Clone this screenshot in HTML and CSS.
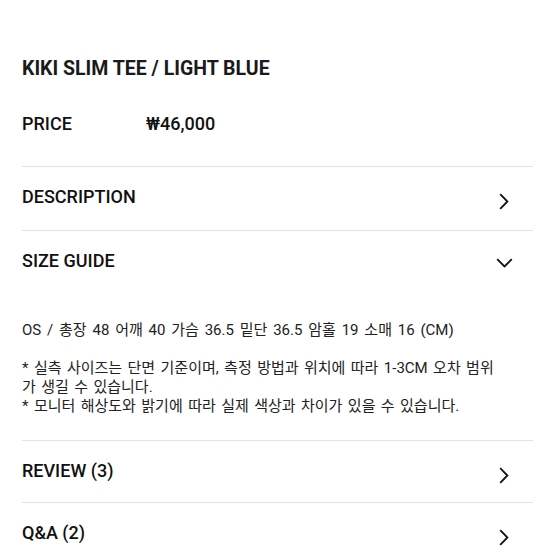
FILE: index.html
```html
<!DOCTYPE html>
<html lang="ko">
<head>
<meta charset="utf-8">
<link rel="stylesheet" href="styles.css">
</head>
<body>
<div class="page">
  <h1 class="title">KIKI SLIM TEE / LIGHT BLUE</h1>
  <div class="price">
    <span class="price-label">PRICE</span>
    <span class="price-value">₩46,000</span>
  </div>

  <div class="row">
    <span class="row-label">DESCRIPTION</span>
    <svg class="chev-right" width="10" height="17" viewBox="0 0 10 17"><path d="M1.2 1.2 L8.4 8.5 L1.2 15.8" fill="none" stroke="#111" stroke-width="1.8"/></svg>
  </div>

  <div class="row row-open">
    <span class="row-label">SIZE GUIDE</span>
    <svg class="chev-down" width="17" height="10" viewBox="0 0 17 10"><path d="M1.2 1.2 L8.5 8.4 L15.8 1.2" fill="none" stroke="#111" stroke-width="1.8"/></svg>
  </div>
  <div class="size-body">
    <p class="size-line">OS / 총장 48 어깨 40 가슴 36.5 밑단 36.5 암홀 19 소매 16 (CM)</p>
    <p class="size-note">* 실측 사이즈는 단면 기준이며, 측정 방법과 위치에 따라 1-3CM 오차 범위<br>가 생길 수 있습니다.<br>* 모니터 해상도와 밝기에 따라 실제 색상과 차이가 있을 수 있습니다.</p>
  </div>

  <div class="row row-tight">
    <span class="row-label">REVIEW (3)</span>
    <svg class="chev-right" width="10" height="17" viewBox="0 0 10 17"><path d="M1.2 1.2 L8.4 8.5 L1.2 15.8" fill="none" stroke="#111" stroke-width="1.8"/></svg>
  </div>
  <div class="row">
    <span class="row-label">Q&amp;A (2)</span>
    <svg class="chev-right" width="10" height="17" viewBox="0 0 10 17"><path d="M1.2 1.2 L8.4 8.5 L1.2 15.8" fill="none" stroke="#111" stroke-width="1.8"/></svg>
  </div>
</div>
</body>
</html>
```

FILE: styles.css
```css
html, body {
  margin: 0;
  padding: 0;
  background: #fff;
}
body {
  font-family: Roboto, "Noto Sans CJK KR", sans-serif;
  color: #111;
}
.page {
  padding: 57px 22px 0 22px;
}
.title {
  margin: 0;
  font-size: 19.5px;
  line-height: 24px;
  font-weight: 700;
  color: #1a1a1a;
}
.price {
  display: flex;
  margin-top: 31px;
  margin-bottom: 30px;
  font-size: 18px;
  line-height: 24px;
  font-weight: 500;
}
.price-label {
  width: 124px;
}
.row {
  display: flex;
  justify-content: space-between;
  align-items: flex-start;
  border-top: 1px solid #e2e2e2;
  padding: 18px 0 20px 0;
}
.row-tight {
  padding-bottom: 18px;
}
.row-label {
  font-size: 18px;
  line-height: 24px;
  font-weight: 500;
}
.chev-right {
  margin-top: 8px;
  margin-right: 24px;
}
.chev-down {
  margin-top: 9px;
  margin-right: 20px;
}
.row-open {
  padding-bottom: 0;
}
.size-body {
  padding-top: 47px;
  padding-bottom: 24px;
  font-size: 15px;
  color: #222;
}
.size-line {
  margin: 0 0 19px 0;
  line-height: 20px;
  word-spacing: 2.1px;
}
.size-note {
  margin: 0;
  line-height: 19px;
  word-spacing: 1.7px;
}
```
